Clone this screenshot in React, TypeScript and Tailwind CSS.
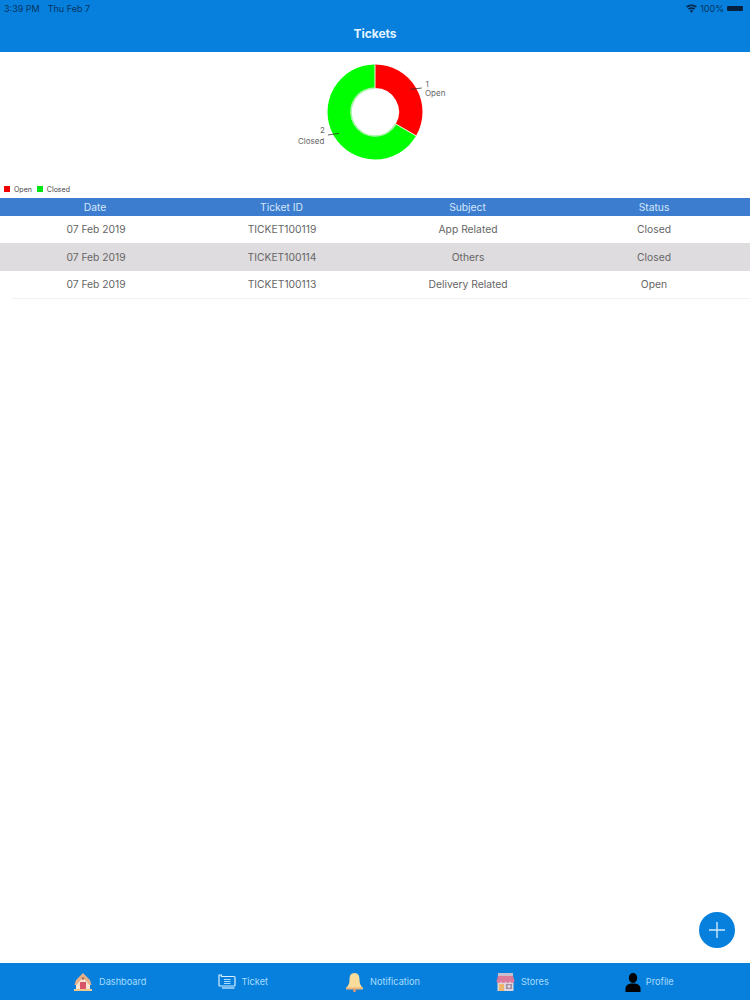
const rows = [
  ["07 Feb 2019", "TICKET100119", "App Related", "Closed"],
  ["07 Feb 2019", "TICKET100114", "Others", "Closed"],
  ["07 Feb 2019", "TICKET100113", "Delivery Related", "Open"],
];

function House() {
  return (
    <svg width="20" height="20" viewBox="0 0 20 20">
      <path d="M10 2 L16 8 L17 12 L17 17 L3 17 L3 12 L4 8 Z" fill="#f8e6d2" />
      <path d="M10 1 L3 8 L1.5 13 L3.5 13 L10 5.5 L16.5 13 L18.5 13 L17 8 Z" fill="#e6b08a" />
      <circle cx="10" cy="6.5" r="1.3" fill="#a86a50" />
      <rect x="7" y="10" width="6" height="7.5" fill="#d9556a" />
      <rect x="1" y="17" width="18" height="2" fill="#f2c98a" />
    </svg>
  );
}
function TicketIcon() {
  return (
    <svg width="18" height="16" viewBox="0 0 18 16" fill="none" stroke="#d8f0ff" strokeWidth="1.2">
      <path d="M1 3 V1 H3.5 V2.5 H16 Q17 2.5 17 3.5 V11 Q17 12 16 12 H2 Q1 12 1 11 Z" />
      <path d="M4 14 H16.5" />
      <path d="M6 5.5 H12.5 M6 7.5 H12.5 M6 9.5 H12.5" stroke="#a8dcff" />
    </svg>
  );
}
function Bell() {
  return (
    <svg width="19" height="20" viewBox="0 0 19 20">
      <path d="M9.5 1 C5.5 1 4.5 4 4.5 8 C4.5 12 3 14 1 16 L18 16 C16 14 14.5 12 14.5 8 C14.5 4 13.5 1 9.5 1 Z" fill="#f7dc9c" />
      <path d="M1 15.5 H18 V17.5 H1 Z" fill="#eeb27c" />
      <circle cx="9.5" cy="18.5" r="1.5" fill="#e59a70" />
    </svg>
  );
}
function Store() {
  return (
    <svg width="19" height="20" viewBox="0 0 19 20">
      <rect x="2" y="1" width="15" height="3" fill="#c9bccb" />
      <rect x="1.5" y="8" width="16" height="11" fill="#dfd3dc" />
      <path d="M2 4 H17 L18.5 9 A2.25 2 0 0 1 14 9 A2.25 2 0 0 1 9.5 9 A2.25 2 0 0 1 5 9 A2.25 2 0 0 1 0.5 9 Z" fill="#dc7a9a" />
      <rect x="3" y="12" width="5" height="7" fill="#eeb56c" />
      <rect x="10" y="12" width="6" height="5" fill="#a58fa6" />
      <circle cx="13" cy="14.5" r="1.4" fill="#e6dce4" />
    </svg>
  );
}
function Person() {
  return (
    <svg width="16" height="19" viewBox="0 0 16 19" fill="#000">
      <ellipse cx="8" cy="5" rx="4.2" ry="5" />
      <path d="M0.5 19 V15.5 C0.5 12.5 3.5 11 5.5 10.5 H10.5 C12.5 11 15.5 12.5 15.5 15.5 V19 Z" />
    </svg>
  );
}

function Wifi() {
  return (
    <svg width="11" height="9" viewBox="0 0 22 17" fill="#04284f">
      <path d="M11 17 L7.5 12.8 C9.5 11.2 12.5 11.2 14.5 12.8 Z" />
      <path d="M6.2 11.2 L3.8 8.4 C8 4.9 14 4.9 18.2 8.4 L15.8 11.2 C13 9 9 9 6.2 11.2 Z" />
      <path d="M2.6 7 L0.2 4.2 C6.5 -1 15.5 -1 21.8 4.2 L19.4 7 C14.5 3 7.5 3 2.6 7 Z" />
    </svg>
  );
}

function Donut() {
  return (
    <svg width="190" height="110" viewBox="0 0 190 110" className="block">
      <path d="M95 8.5 A47.5 47.5 0 0 1 136.1 79.8 L115.8 68 A24 24 0 0 0 95 32 Z" fill="#ff0000" />
      <path d="M136.1 79.8 A47.5 47.5 0 1 1 95 8.5 L95 32 A24 24 0 1 0 115.8 68 Z" fill="#00ff00" />
      <path d="M95 8.5 V32 M115.8 68 L136.1 79.8" stroke="#f5f5dc" strokeWidth="1" />
      <path d="M115.8 68 A24 24 0 1 1 95 32" fill="none" stroke="#a8f5a8" strokeWidth="1.6" />
      <path d="M130.7 33.3 L141.7 32" stroke="#333" strokeWidth="0.8" fill="none" />
      <path d="M48 79 L59 77.3" stroke="#333" strokeWidth="0.8" fill="none" />
      <g fontFamily="Inter, sans-serif" fontSize="8" fill="#666">
        <text x="145.5" y="31">1</text>
        <text x="145" y="40.3">Open</text>
        <text x="40" y="77">2</text>
        <text x="18" y="87.7">Closed</text>
      </g>
    </svg>
  );
}

const tabs = [
  { label: "Dashboard", icon: <House />, cls: "gap-[6px]", width: "w-[20px]" },
  { label: "Ticket", icon: <TicketIcon />, cls: "gap-[5px] ml-[-4px]", width: "w-[18px]" },
  { label: "Notification", icon: <Bell />, cls: "gap-[6px] ml-[1px]", width: "w-[19px]" },
  { label: "Stores", icon: <Store />, cls: "gap-[6px]", width: "w-[19px]" },
  { label: "Profile", icon: <Person />, cls: "gap-[5px]", width: "w-[16px]" },
];

export default function App() {
  return (
    <div className="relative flex h-[1000px] w-[750px] flex-col overflow-hidden bg-white font-['Inter',sans-serif]">
      <header className="flex h-[52px] shrink-0 flex-col bg-[#0680dc]">
        <div className="flex h-[14px] items-end justify-between pl-[4px] pr-[7px] text-[9px] leading-[11px] text-[#04335f]">
          <div className="flex gap-[8px]">
            <span>3:39 PM</span>
            <span>Thu Feb 7</span>
          </div>
          <div className="flex items-center gap-[3px]">
            <Wifi />
            <span>100%</span>
            <span className="h-[5px] w-[16px] rounded-[1px] bg-[#04203f]" />
          </div>
        </div>
        <div className="flex h-[38px] items-center justify-center pt-[1px] text-[12px] font-bold text-[#e6f4ff]">Tickets</div>
      </header>

      <section className="flex h-[146px] shrink-0 flex-col">
        <div className="flex h-[126px] justify-center pt-[4px]">
          <Donut />
        </div>
        <div className="flex h-[20px] items-start gap-[4px] pl-[4px] pt-[6px] text-[7px] leading-[11px] text-[#444]">
          <span className="mt-[2px] h-[6px] w-[6px] bg-[#f00000]" />
          <span className="mr-[1px]">Open</span>
          <span className="mt-[2px] h-[6px] w-[6px] bg-[#00e810]" />
          <span>Closed</span>
        </div>
      </section>

      <div className="grid h-[18px] shrink-0 grid-cols-[186px_186px_186px_186px] items-center bg-[#3c7dd0] pl-[2px] pt-[1px] text-center text-[10.3px] text-[#d5e8fb]">
        <span>Date</span>
        <span className="pl-[1px]">Ticket ID</span>
        <span className="pl-[1px]">Subject</span>
        <span className="pl-[2px]">Status</span>
      </div>

      <div className="flex-1">
        {rows.map((r, i) => (
          <div
            key={r[1]}
            className={`grid grid-cols-[186px_186px_186px_186px] items-center pl-[3px] text-center text-[10.3px] text-[#666] ${
              i === 1 ? "h-[28px] bg-[#dedcde] pt-[1px]" : "h-[27px]"
            }`}
          >
            {r.map((c, j) => (
              <span key={j}>{c}</span>
            ))}
          </div>
        ))}
        <div className="ml-[12px] h-px bg-[#f2f2f2]" />
      </div>

      <button className="absolute left-[699px] top-[912px] flex h-[36px] w-[36px] items-center justify-center rounded-full bg-[#0680dc]">
        <svg width="18" height="18" viewBox="0 0 18 18" stroke="#cfe8fa" strokeWidth="1.4">
          <path d="M9 1 V17 M1 9 H17" />
        </svg>
      </button>

      <nav className="flex h-[37px] shrink-0 items-center gap-[76px] bg-[#0680dc] pl-[73px] pt-[1px] text-[9.2px] text-[#a8dcff]">
        {tabs.map((t) => (
          <div key={t.label} className={`flex items-center ${t.cls}`}>
            <span className={`flex justify-center ${t.width}`}>{t.icon}</span>
            <span>{t.label}</span>
          </div>
        ))}
      </nav>
    </div>
  );
}
